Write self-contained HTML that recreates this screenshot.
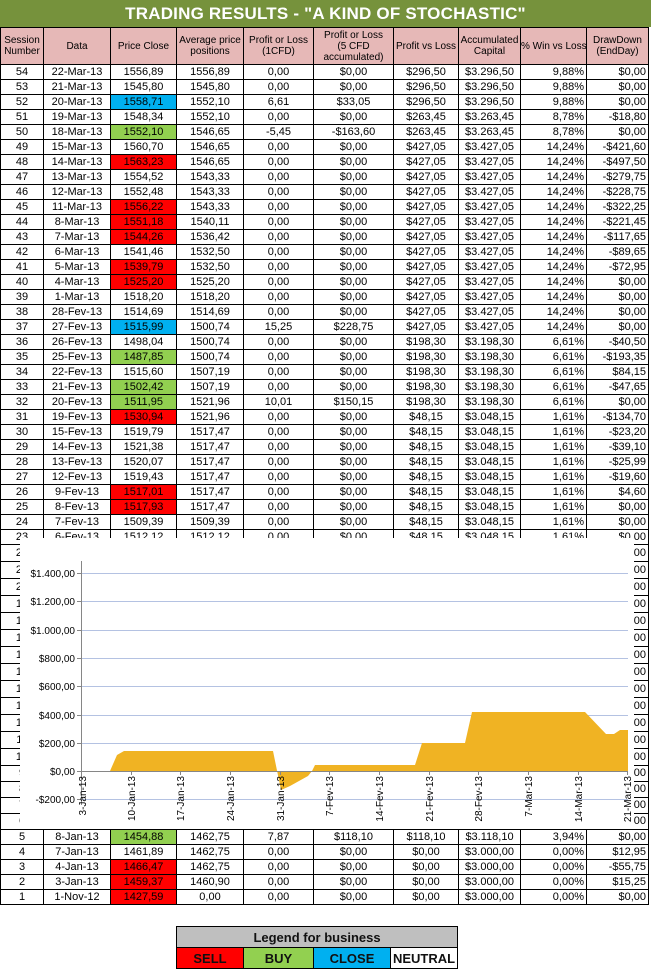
<!DOCTYPE html>
<html><head><meta charset="utf-8">
<style>
*{margin:0;padding:0;box-sizing:border-box}
body{width:668px;height:969px;background:#fff;position:relative;overflow:hidden;font-family:"Liberation Sans",Arial,sans-serif}
#title{position:absolute;left:0;top:0;width:651px;height:27px;background:#76923C;color:#fff;font-weight:bold;font-size:17px;text-align:center;line-height:27px;letter-spacing:0.2px}
table{position:absolute;left:0;border-collapse:collapse;table-layout:fixed;width:649px;font-size:11px;color:#000}
td{border:1px solid #000;padding:0;text-align:center;height:15px;line-height:13px;white-space:nowrap;overflow:hidden}
td.r{text-align:right;padding-right:2px}
.h td{background:#E6B8B7;font-size:10px;line-height:11px;height:37px}
.b{background:#00B0F0}.g{background:#92D050}.rd{background:#FF0000}
tr.x td{height:17px}
tr.y td{height:16px}
#leg{position:absolute;left:176px;top:926px;width:281px;border-collapse:collapse;font-weight:bold;font-size:13px}
#leg td{height:21px;line-height:19px;color:#111}
</style></head><body>
<div id="title">TRADING RESULTS - "A KIND OF STOCHASTIC"</div>
<table style="top:27px">
<colgroup><col style="width:43px"><col style="width:67px"><col style="width:66px"><col style="width:67px"><col style="width:70px"><col style="width:80px"><col style="width:65px"><col style="width:62px"><col style="width:66px"><col style="width:62px"></colgroup>
<tr class="h"><td>Session<br>Number</td><td>Data</td><td>Price Close</td><td>Average price<br>positions</td><td>Profit or Loss<br>(1CFD)</td><td>Profit or Loss<br>(5 CFD<br>accumulated)</td><td>Profit vs Loss</td><td>Accumulated<br>Capital</td><td>% Win vs Loss</td><td>DrawDown<br>(EndDay)</td></tr>
<tr><td>54</td><td>22-Mar-13</td><td>1556,89</td><td>1556,89</td><td>0,00</td><td>$0,00</td><td>$296,50</td><td>$3.296,50</td><td class="r">9,88%</td><td class="r">$0,00</td></tr>
<tr><td>53</td><td>21-Mar-13</td><td>1545,80</td><td>1545,80</td><td>0,00</td><td>$0,00</td><td>$296,50</td><td>$3.296,50</td><td class="r">9,88%</td><td class="r">$0,00</td></tr>
<tr><td>52</td><td>20-Mar-13</td><td class="b">1558,71</td><td>1552,10</td><td>6,61</td><td>$33,05</td><td>$296,50</td><td>$3.296,50</td><td class="r">9,88%</td><td class="r">$0,00</td></tr>
<tr><td>51</td><td>19-Mar-13</td><td>1548,34</td><td>1552,10</td><td>0,00</td><td>$0,00</td><td>$263,45</td><td>$3.263,45</td><td class="r">8,78%</td><td class="r">-$18,80</td></tr>
<tr><td>50</td><td>18-Mar-13</td><td class="g">1552,10</td><td>1546,65</td><td>-5,45</td><td>-$163,60</td><td>$263,45</td><td>$3.263,45</td><td class="r">8,78%</td><td class="r">$0,00</td></tr>
<tr><td>49</td><td>15-Mar-13</td><td>1560,70</td><td>1546,65</td><td>0,00</td><td>$0,00</td><td>$427,05</td><td>$3.427,05</td><td class="r">14,24%</td><td class="r">-$421,60</td></tr>
<tr><td>48</td><td>14-Mar-13</td><td class="rd">1563,23</td><td>1546,65</td><td>0,00</td><td>$0,00</td><td>$427,05</td><td>$3.427,05</td><td class="r">14,24%</td><td class="r">-$497,50</td></tr>
<tr><td>47</td><td>13-Mar-13</td><td>1554,52</td><td>1543,33</td><td>0,00</td><td>$0,00</td><td>$427,05</td><td>$3.427,05</td><td class="r">14,24%</td><td class="r">-$279,75</td></tr>
<tr><td>46</td><td>12-Mar-13</td><td>1552,48</td><td>1543,33</td><td>0,00</td><td>$0,00</td><td>$427,05</td><td>$3.427,05</td><td class="r">14,24%</td><td class="r">-$228,75</td></tr>
<tr><td>45</td><td>11-Mar-13</td><td class="rd">1556,22</td><td>1543,33</td><td>0,00</td><td>$0,00</td><td>$427,05</td><td>$3.427,05</td><td class="r">14,24%</td><td class="r">-$322,25</td></tr>
<tr><td>44</td><td>8-Mar-13</td><td class="rd">1551,18</td><td>1540,11</td><td>0,00</td><td>$0,00</td><td>$427,05</td><td>$3.427,05</td><td class="r">14,24%</td><td class="r">-$221,45</td></tr>
<tr><td>43</td><td>7-Mar-13</td><td class="rd">1544,26</td><td>1536,42</td><td>0,00</td><td>$0,00</td><td>$427,05</td><td>$3.427,05</td><td class="r">14,24%</td><td class="r">-$117,65</td></tr>
<tr><td>42</td><td>6-Mar-13</td><td>1541,46</td><td>1532,50</td><td>0,00</td><td>$0,00</td><td>$427,05</td><td>$3.427,05</td><td class="r">14,24%</td><td class="r">-$89,65</td></tr>
<tr><td>41</td><td>5-Mar-13</td><td class="rd">1539,79</td><td>1532,50</td><td>0,00</td><td>$0,00</td><td>$427,05</td><td>$3.427,05</td><td class="r">14,24%</td><td class="r">-$72,95</td></tr>
<tr><td>40</td><td>4-Mar-13</td><td class="rd">1525,20</td><td>1525,20</td><td>0,00</td><td>$0,00</td><td>$427,05</td><td>$3.427,05</td><td class="r">14,24%</td><td class="r">$0,00</td></tr>
<tr><td>39</td><td>1-Mar-13</td><td>1518,20</td><td>1518,20</td><td>0,00</td><td>$0,00</td><td>$427,05</td><td>$3.427,05</td><td class="r">14,24%</td><td class="r">$0,00</td></tr>
<tr><td>38</td><td>28-Fev-13</td><td>1514,69</td><td>1514,69</td><td>0,00</td><td>$0,00</td><td>$427,05</td><td>$3.427,05</td><td class="r">14,24%</td><td class="r">$0,00</td></tr>
<tr><td>37</td><td>27-Fev-13</td><td class="b">1515,99</td><td>1500,74</td><td>15,25</td><td>$228,75</td><td>$427,05</td><td>$3.427,05</td><td class="r">14,24%</td><td class="r">$0,00</td></tr>
<tr><td>36</td><td>26-Fev-13</td><td>1498,04</td><td>1500,74</td><td>0,00</td><td>$0,00</td><td>$198,30</td><td>$3.198,30</td><td class="r">6,61%</td><td class="r">-$40,50</td></tr>
<tr><td>35</td><td>25-Fev-13</td><td class="g">1487,85</td><td>1500,74</td><td>0,00</td><td>$0,00</td><td>$198,30</td><td>$3.198,30</td><td class="r">6,61%</td><td class="r">-$193,35</td></tr>
<tr><td>34</td><td>22-Fev-13</td><td>1515,60</td><td>1507,19</td><td>0,00</td><td>$0,00</td><td>$198,30</td><td>$3.198,30</td><td class="r">6,61%</td><td class="r">$84,15</td></tr>
<tr><td>33</td><td>21-Fev-13</td><td class="g">1502,42</td><td>1507,19</td><td>0,00</td><td>$0,00</td><td>$198,30</td><td>$3.198,30</td><td class="r">6,61%</td><td class="r">-$47,65</td></tr>
<tr><td>32</td><td>20-Fev-13</td><td class="g">1511,95</td><td>1521,96</td><td>10,01</td><td>$150,15</td><td>$198,30</td><td>$3.198,30</td><td class="r">6,61%</td><td class="r">$0,00</td></tr>
<tr><td>31</td><td>19-Fev-13</td><td class="rd">1530,94</td><td>1521,96</td><td>0,00</td><td>$0,00</td><td>$48,15</td><td>$3.048,15</td><td class="r">1,61%</td><td class="r">-$134,70</td></tr>
<tr><td>30</td><td>15-Fev-13</td><td>1519,79</td><td>1517,47</td><td>0,00</td><td>$0,00</td><td>$48,15</td><td>$3.048,15</td><td class="r">1,61%</td><td class="r">-$23,20</td></tr>
<tr><td>29</td><td>14-Fev-13</td><td>1521,38</td><td>1517,47</td><td>0,00</td><td>$0,00</td><td>$48,15</td><td>$3.048,15</td><td class="r">1,61%</td><td class="r">-$39,10</td></tr>
<tr><td>28</td><td>13-Fev-13</td><td>1520,07</td><td>1517,47</td><td>0,00</td><td>$0,00</td><td>$48,15</td><td>$3.048,15</td><td class="r">1,61%</td><td class="r">-$25,99</td></tr>
<tr><td>27</td><td>12-Fev-13</td><td>1519,43</td><td>1517,47</td><td>0,00</td><td>$0,00</td><td>$48,15</td><td>$3.048,15</td><td class="r">1,61%</td><td class="r">-$19,60</td></tr>
<tr><td>26</td><td>9-Fev-13</td><td class="rd">1517,01</td><td>1517,47</td><td>0,00</td><td>$0,00</td><td>$48,15</td><td>$3.048,15</td><td class="r">1,61%</td><td class="r">$4,60</td></tr>
<tr><td>25</td><td>8-Fev-13</td><td class="rd">1517,93</td><td>1517,47</td><td>0,00</td><td>$0,00</td><td>$48,15</td><td>$3.048,15</td><td class="r">1,61%</td><td class="r">$0,00</td></tr>
<tr><td>24</td><td>7-Fev-13</td><td>1509,39</td><td>1509,39</td><td>0,00</td><td>$0,00</td><td>$48,15</td><td>$3.048,15</td><td class="r">1,61%</td><td class="r">$0,00</td></tr>
<tr><td>23</td><td>6-Fev-13</td><td>1512,12</td><td>1512,12</td><td>0,00</td><td>$0,00</td><td>$48,15</td><td>$3.048,15</td><td class="r">1,61%</td><td class="r">$0,00</td></tr>
<tr class="x"><td>22</td><td>5-Fev-13</td><td>1511,29</td><td>1511,29</td><td>0,00</td><td>$0,00</td><td>$48,15</td><td>$3.048,15</td><td class="r">1,61%</td><td class="r">$0,00</td></tr>
<tr class="x"><td>21</td><td>4-Fev-13</td><td>1495,71</td><td>1495,71</td><td>0,00</td><td>$0,00</td><td>$48,15</td><td>$3.048,15</td><td class="r">1,61%</td><td class="r">$0,00</td></tr>
<tr class="x"><td>20</td><td>1-Fev-13</td><td>1513,17</td><td>1513,17</td><td>0,00</td><td>$0,00</td><td>$48,15</td><td>$3.048,15</td><td class="r">1,61%</td><td class="r">$0,00</td></tr>
<tr class="x"><td>19</td><td>31-Jan-13</td><td>1498,11</td><td>1498,11</td><td>0,00</td><td>$0,00</td><td>$48,15</td><td>$3.048,15</td><td class="r">1,61%</td><td class="r">$0,00</td></tr>
<tr class="x"><td>18</td><td>30-Jan-13</td><td>1501,96</td><td>1501,96</td><td>0,00</td><td>$0,00</td><td>$148,15</td><td>$3.148,15</td><td class="r">4,94%</td><td class="r">$0,00</td></tr>
<tr class="x"><td>17</td><td>29-Jan-13</td><td>1507,84</td><td>1507,84</td><td>0,00</td><td>$0,00</td><td>$148,15</td><td>$3.148,15</td><td class="r">4,94%</td><td class="r">$0,00</td></tr>
<tr class="x"><td>16</td><td>28-Jan-13</td><td>1500,18</td><td>1500,18</td><td>0,00</td><td>$0,00</td><td>$148,15</td><td>$3.148,15</td><td class="r">4,94%</td><td class="r">$0,00</td></tr>
<tr class="x"><td>15</td><td>25-Jan-13</td><td>1502,96</td><td>1502,96</td><td>0,00</td><td>$0,00</td><td>$148,15</td><td>$3.148,15</td><td class="r">4,94%</td><td class="r">$0,00</td></tr>
<tr class="x"><td>14</td><td>24-Jan-13</td><td>1494,82</td><td>1494,82</td><td>0,00</td><td>$0,00</td><td>$148,15</td><td>$3.148,15</td><td class="r">4,94%</td><td class="r">$0,00</td></tr>
<tr class="x"><td>13</td><td>23-Jan-13</td><td>1494,81</td><td>1494,81</td><td>0,00</td><td>$0,00</td><td>$148,15</td><td>$3.148,15</td><td class="r">4,94%</td><td class="r">$0,00</td></tr>
<tr class="x"><td>12</td><td>22-Jan-13</td><td>1492,56</td><td>1492,56</td><td>0,00</td><td>$0,00</td><td>$148,15</td><td>$3.148,15</td><td class="r">4,94%</td><td class="r">$0,00</td></tr>
<tr class="x"><td>11</td><td>18-Jan-13</td><td>1485,98</td><td>1485,98</td><td>0,00</td><td>$0,00</td><td>$148,15</td><td>$3.148,15</td><td class="r">4,94%</td><td class="r">$0,00</td></tr>
<tr class="x"><td>10</td><td>17-Jan-13</td><td>1480,94</td><td>1480,94</td><td>0,00</td><td>$0,00</td><td>$148,15</td><td>$3.148,15</td><td class="r">4,94%</td><td class="r">$0,00</td></tr>
<tr class="y"><td>9</td><td>16-Jan-13</td><td>1472,63</td><td>1472,63</td><td>0,00</td><td>$0,00</td><td>$148,15</td><td>$3.148,15</td><td class="r">4,94%</td><td class="r">$0,00</td></tr>
<tr class="y"><td>8</td><td>15-Jan-13</td><td>1472,34</td><td>1472,34</td><td>0,00</td><td>$0,00</td><td>$148,15</td><td>$3.148,15</td><td class="r">4,94%</td><td class="r">$0,00</td></tr>
<tr class="y"><td>7</td><td>14-Jan-13</td><td>1470,68</td><td>1470,68</td><td>0,00</td><td>$0,00</td><td>$148,15</td><td>$3.148,15</td><td class="r">4,94%</td><td class="r">$0,00</td></tr>
<tr class="y"><td>6</td><td>11-Jan-13</td><td class="b">1472,05</td><td>1462,75</td><td>0,00</td><td>$0,00</td><td>$118,10</td><td>$3.118,10</td><td class="r">3,94%</td><td class="r">$0,00</td></tr>
<tr><td>5</td><td>8-Jan-13</td><td class="g">1454,88</td><td>1462,75</td><td>7,87</td><td>$118,10</td><td>$118,10</td><td>$3.118,10</td><td class="r">3,94%</td><td class="r">$0,00</td></tr>
<tr><td>4</td><td>7-Jan-13</td><td>1461,89</td><td>1462,75</td><td>0,00</td><td>$0,00</td><td>$0,00</td><td>$3.000,00</td><td class="r">0,00%</td><td class="r">$12,95</td></tr>
<tr><td>3</td><td>4-Jan-13</td><td class="rd">1466,47</td><td>1462,75</td><td>0,00</td><td>$0,00</td><td>$0,00</td><td>$3.000,00</td><td class="r">0,00%</td><td class="r">-$55,75</td></tr>
<tr><td>2</td><td>3-Jan-13</td><td class="rd">1459,37</td><td>1460,90</td><td>0,00</td><td>$0,00</td><td>$0,00</td><td>$3.000,00</td><td class="r">0,00%</td><td class="r">$15,25</td></tr>
<tr><td>1</td><td>1-Nov-12</td><td class="rd">1427,59</td><td>0,00</td><td>0,00</td><td>$0,00</td><td>$0,00</td><td>$3.000,00</td><td class="r">0,00%</td><td class="r">$0,00</td></tr>
</table>

<svg style="position:absolute;left:0;top:0" width="668" height="969" xmlns="http://www.w3.org/2000/svg" font-family="Liberation Sans, Arial, sans-serif" font-size="10">
<rect x="20" y="538" width="614" height="291" fill="#fff"/>
<g stroke="#B4C2E2" stroke-width="1">
<line x1="81" y1="573.5" x2="628" y2="573.5"/>
<line x1="81" y1="601.5" x2="628" y2="601.5"/>
<line x1="81" y1="630.5" x2="628" y2="630.5"/>
<line x1="81" y1="658.5" x2="628" y2="658.5"/>
<line x1="81" y1="686.5" x2="628" y2="686.5"/>
<line x1="81" y1="715.5" x2="628" y2="715.5"/>
<line x1="81" y1="743.5" x2="628" y2="743.5"/>
<line x1="81" y1="799.5" x2="628" y2="799.5"/>
</g>
<path d="M110,771 L117,755 L124,751 L273,751 L281,790 L290,786 L308,776 L312,771 L315,765 L415,765 L422,743 L465,743 L472,712 L585,712 L606,734 L614,734 L620,730 L628,730 L628,771 Z" fill="#F0B323"/>
<g stroke="#868686" stroke-width="1">
<line x1="81.5" y1="561" x2="81.5" y2="805"/>
<line x1="81" y1="771.5" x2="628" y2="771.5"/>
<line x1="77" y1="573.5" x2="81" y2="573.5"/><line x1="77" y1="601.5" x2="81" y2="601.5"/><line x1="77" y1="630.5" x2="81" y2="630.5"/><line x1="77" y1="658.5" x2="81" y2="658.5"/><line x1="77" y1="686.5" x2="81" y2="686.5"/><line x1="77" y1="715.5" x2="81" y2="715.5"/><line x1="77" y1="743.5" x2="81" y2="743.5"/><line x1="77" y1="771.5" x2="81" y2="771.5"/><line x1="77" y1="799.5" x2="81" y2="799.5"/>
<line x1="131.5" y1="771" x2="131.5" y2="775"/><line x1="180.5" y1="771" x2="180.5" y2="775"/><line x1="230.5" y1="771" x2="230.5" y2="775"/><line x1="280.5" y1="771" x2="280.5" y2="775"/><line x1="329.5" y1="771" x2="329.5" y2="775"/><line x1="379.5" y1="771" x2="379.5" y2="775"/><line x1="429.5" y1="771" x2="429.5" y2="775"/><line x1="478.5" y1="771" x2="478.5" y2="775"/><line x1="528.5" y1="771" x2="528.5" y2="775"/><line x1="578.5" y1="771" x2="578.5" y2="775"/><line x1="627.5" y1="771" x2="627.5" y2="775"/>
</g>
<g text-anchor="end" fill="#000">
<text x="75" y="577">$1.400,00</text>
<text x="75" y="605">$1.200,00</text>
<text x="75" y="634">$1.000,00</text>
<text x="75" y="662">$800,00</text>
<text x="75" y="690">$600,00</text>
<text x="75" y="719">$400,00</text>
<text x="75" y="747">$200,00</text>
<text x="75" y="775">$0,00</text>
<text x="75" y="803">-$200,00</text>
</g>
<g text-anchor="end" fill="#000">
<text transform="translate(86,776) rotate(-90)">3-Jan-13</text>
<text transform="translate(135,776) rotate(-90)">10-Jan-13</text>
<text transform="translate(184,776) rotate(-90)">17-Jan-13</text>
<text transform="translate(234,776) rotate(-90)">24-Jan-13</text>
<text transform="translate(284,776) rotate(-90)">31-Jan-13</text>
<text transform="translate(333,776) rotate(-90)">7-Fev-13</text>
<text transform="translate(383,776) rotate(-90)">14-Fev-13</text>
<text transform="translate(433,776) rotate(-90)">21-Fev-13</text>
<text transform="translate(482,776) rotate(-90)">28-Fev-13</text>
<text transform="translate(532,776) rotate(-90)">7-Mar-13</text>
<text transform="translate(582,776) rotate(-90)">14-Mar-13</text>
<text transform="translate(631,776) rotate(-90)">21-Mar-13</text>
</g>
</svg>

<table id="leg">
<colgroup><col style="width:67px"><col style="width:70px"><col style="width:77px"><col style="width:67px"></colgroup>
<tr><td colspan="4" style="background:#BFBFBF">Legend for business</td></tr>
<tr><td class="rd">SELL</td><td class="g">BUY</td><td class="b">CLOSE</td><td>NEUTRAL</td></tr>
</table>
</body></html>
